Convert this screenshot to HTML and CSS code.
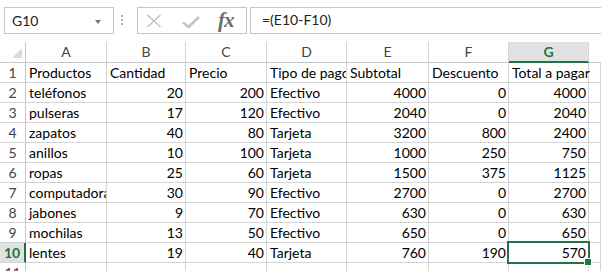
FILE: index.html
```html
<!DOCTYPE html>
<html lang="es">
<head>
<meta charset="utf-8">
<link rel="stylesheet" href="styles.css">
</head>
<body>
<div class="fbar">
  <div class="namebox"><span>G10</span><span class="caret"></span></div>
  <div class="dots"></div>
  <div class="fxbox">
    <svg class="ico-x" width="16" height="14" viewBox="0 0 16 14"><path d="M1.5 1 L14.5 13 M14.5 1 L1.5 13" stroke="#c3c3c3" stroke-width="1.6" fill="none"/></svg>
    <svg class="ico-ok" width="18" height="12" viewBox="0 0 18 12"><path d="M1 6.5 L6.5 11 L17 1" stroke="#c3c3c3" stroke-width="2.6" fill="none"/></svg>
    <span class="fx"><i>f</i><i>x</i></span>
  </div>
  <div class="formula">=(E10-F10)</div>
</div>
<div class="sheet">
  <div class="ch corner"><span class="tri"></span></div>
  <div class="ch">A</div><div class="ch">B</div><div class="ch">C</div><div class="ch">D</div><div class="ch">E</div><div class="ch">F</div><div class="ch selh">G</div><div class="ch last"></div>

  <div class="rh">1</div><div class="c">Productos</div><div class="c">Cantidad</div><div class="c">Precio</div><div class="c">Tipo de pago</div><div class="c">Subtotal</div><div class="c">Descuento</div><div class="c ov">Total a pagar</div><div class="c"></div>
  <div class="rh">2</div><div class="c">teléfonos</div><div class="c n">20</div><div class="c n">200</div><div class="c">Efectivo</div><div class="c n">4000</div><div class="c n">0</div><div class="c n">4000</div><div class="c"></div>
  <div class="rh">3</div><div class="c">pulseras</div><div class="c n">17</div><div class="c n">120</div><div class="c">Efectivo</div><div class="c n">2040</div><div class="c n">0</div><div class="c n">2040</div><div class="c"></div>
  <div class="rh">4</div><div class="c">zapatos</div><div class="c n">40</div><div class="c n">80</div><div class="c">Tarjeta</div><div class="c n">3200</div><div class="c n">800</div><div class="c n">2400</div><div class="c"></div>
  <div class="rh">5</div><div class="c">anillos</div><div class="c n">10</div><div class="c n">100</div><div class="c">Tarjeta</div><div class="c n">1000</div><div class="c n">250</div><div class="c n">750</div><div class="c"></div>
  <div class="rh">6</div><div class="c">ropas</div><div class="c n">25</div><div class="c n">60</div><div class="c">Tarjeta</div><div class="c n">1500</div><div class="c n">375</div><div class="c n">1125</div><div class="c"></div>
  <div class="rh">7</div><div class="c">computadoras</div><div class="c n">30</div><div class="c n">90</div><div class="c">Efectivo</div><div class="c n">2700</div><div class="c n">0</div><div class="c n">2700</div><div class="c"></div>
  <div class="rh">8</div><div class="c">jabones</div><div class="c n">9</div><div class="c n">70</div><div class="c">Efectivo</div><div class="c n">630</div><div class="c n">0</div><div class="c n">630</div><div class="c"></div>
  <div class="rh">9</div><div class="c">mochilas</div><div class="c n">13</div><div class="c n">50</div><div class="c">Efectivo</div><div class="c n">650</div><div class="c n">0</div><div class="c n">650</div><div class="c"></div>
  <div class="rh selr">10</div><div class="c">lentes</div><div class="c n">19</div><div class="c n">40</div><div class="c">Tarjeta</div><div class="c n">760</div><div class="c n">190</div><div class="c n sel">570</div><div class="c"></div>
  <div class="rh">11</div><div class="c"></div><div class="c"></div><div class="c"></div><div class="c"></div><div class="c"></div><div class="c"></div><div class="c"></div><div class="c"></div>
</div>
</body>
</html>
```
FILE: styles.css
```css
* { box-sizing: border-box; }
html, body { margin: 0; padding: 0; background: #fff; }
body {
  width: 601px; height: 271px; overflow: hidden;
  font-family: "Lato", "Liberation Sans", sans-serif;
  font-size: 14px; color: #000;
}
.fbar {
  display: flex; align-items: flex-start;
  height: 42px; padding-top: 7px;
}
.namebox {
  margin-left: 4px; width: 110px; height: 27px;
  border: 1px solid #c6c6c6;
  display: flex; align-items: center; justify-content: space-between;
  padding: 0 12px 0 7px; color: #222; font-size: 14px;
}
.caret {
  width: 0; height: 0;
  border-left: 3.5px solid transparent; border-right: 3.5px solid transparent;
  border-top: 4px solid #777; margin-top: 2px;
}
.dots {
  width: 2px; height: 13px; margin: 7px 14px 0 7px;
  background: radial-gradient(circle, #b0b0b0 0.8px, transparent 1px) 0 0 / 2px 4px repeat-y;
}
.fxbox {
  width: 110px; height: 27px; border: 1px solid #c6c6c6;
  display: flex; align-items: center; padding-left: 8px;
}
.ico-x { margin-top: 1px; }
.ico-ok { margin-left: 20px; margin-top: 3px; }
.fx {
  margin-left: 18px; font-family: "Liberation Serif", "DejaVu Serif", serif;
  font-size: 21px; color: #6b6b6b; font-weight: bold; letter-spacing: -1px;
}
.fx i { font-style: italic; }
.formula {
  flex: 1; margin-left: 3px; height: 27px;
  border: 1px solid #c6c6c6; border-right: 0;
  padding-left: 11px; line-height: 24px; color: #222; font-size: 14px;
}
.sheet {
  display: grid;
  grid-template-columns: 26px 81px 79px 81px 80px 82px 80px 80px 1fr;
  grid-template-rows: 21px;
  grid-auto-rows: 20px;
}
.ch, .rh, .c {
  border-right: 1px solid #d4d4d4; border-bottom: 1px solid #d4d4d4;
  overflow: hidden; white-space: nowrap;
}
.ch {
  text-align: center; color: #444; line-height: 20px; font-size: 14px;
  border-bottom-color: #c6c6c6;
}
.ch.last { border-right: 0; }
.corner { position: relative; border-right-color: #c6c6c6; }
.tri {
  position: absolute; right: 3px; bottom: 4px; width: 0; height: 0;
  border-left: 10px solid transparent; border-bottom: 10px solid #dcdcdc;
}
.selh {
  background: #e1e1e1; color: #217346; font-weight: bold;
  border-bottom: 2px solid #217346;
}
.rh {
  text-align: center; color: #444; line-height: 20px; font-size: 14px;
  border-right-color: #c6c6c6;
}
.selr {
  background: #e1e1e1; color: #217346; font-weight: bold;
  border-right: 2px solid #217346;
}
.c { padding: 0 3px; line-height: 20px; }
.c.ov { overflow: visible; position: relative; z-index: 1; }
.c.n { text-align: right; padding-right: 2px; }
.sel { position: relative; overflow: visible; }
.sel::after {
  content: ""; position: absolute; left: -2px; top: -2px; right: -2px; bottom: -2px;
  border: 2px solid #217346;
}
.sel::before {
  content: ""; position: absolute; right: -4px; bottom: -4px; width: 6px; height: 6px;
  background: #217346; border: 1px solid #fff; z-index: 2;
}
```
